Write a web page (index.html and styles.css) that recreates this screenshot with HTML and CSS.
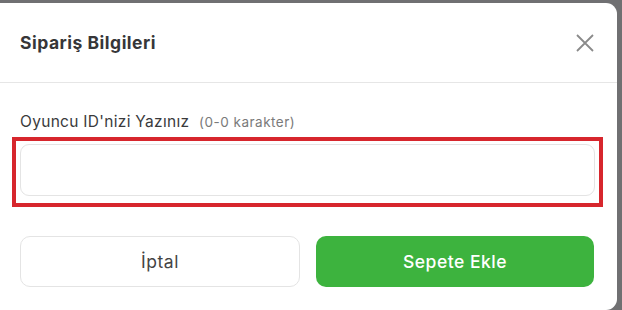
FILE: index.html
```html
<!DOCTYPE html>
<html lang="tr">

<head>
    <meta charset="UTF-8" />
    <title>Sipariş Bilgileri</title>
    <link rel="stylesheet" href="styles.css">
</head>

<body>
    <div class="modal">
        <div class="modal-header">
            <div class="modal-title">Sipariş Bilgileri</div>
            <button class="close-btn" title="Kapat">
                <svg viewBox="0 0 20 20">
                    <path d="M2 2 L18 18 M18 2 L2 18" />
                </svg>
            </button>
        </div>

        <div class="modal-body">
            <label for="playerId">Oyuncu ID'nizi Yazınız <span class="hint">(0-0 karakter)</span></label>
            <div class="input-outline">
                <input type="text" id="playerId" />
            </div>

            <div class="button-row">
                <button class="btn btn-cancel">İptal</button>
                <button class="btn btn-add">Sepete Ekle</button>
            </div>
        </div>
    </div>
</body>

</html>
```

FILE: styles.css
```css
body {
    background-color: #707072;
    /* dimmed backdrop */
    font-family: Inter, "Noto Sans", sans-serif;
    margin: 0;
    padding: 3px 5px 0 0;
    height: 310px;
    box-sizing: border-box;
    overflow: hidden;
}

.modal {
    background-color: #fff;
    border-radius: 0 11px 11px 0;
    height: 307px;
    color: #333;
}

.modal-header {
    height: 80px;
    box-sizing: border-box;
    padding: 0 22px 0 20px;
    display: flex;
    align-items: center;
    justify-content: space-between;
    border-bottom: 1px solid #e6e6e6;
}

.modal-title {
    font-size: 17.5px;
    font-weight: 700;
    color: #363638;
    letter-spacing: 0.5px;
}

.close-btn {
    background: none;
    border: none;
    padding: 0;
    width: 20px;
    height: 20px;
    cursor: pointer;
}

.close-btn svg {
    width: 20px;
    height: 20px;
    stroke: #8a8a8a;
    stroke-width: 1.8;
    fill: none;
}

.modal-body {
    padding: 29px 14px 0 12px;
}

label {
    display: block;
    font-size: 15.5px;
    line-height: 20px;
    color: #3a3a3c;
    margin: 0 0 5px 8px;
    letter-spacing: 0.3px;
}

.hint {
    font-size: 13.5px;
    color: #7a7a7a;
    margin-left: 5px;
    letter-spacing: 0.5px;
}

.input-outline {
    border: 4px solid #d7262d;
    /* red highlight */
    padding: 3px 4px 7px 4px;
}

.input-outline input {
    display: block;
    width: 100%;
    height: 52px;
    box-sizing: border-box;
    border: 1px solid #e4e4e4;
    border-radius: 9px;
    font-size: 15px;
    padding: 0 14px;
    outline: none;
}

.button-row {
    margin: 29px 0 0 8px;
    display: flex;
    gap: 16px;
    padding-right: 9px;
}

.btn {
    flex: 1;
    height: 51px;
    border-radius: 10px;
    font-family: inherit;
    font-size: 17.5px;
    letter-spacing: 0.5px;
    cursor: pointer;
}

.btn-cancel {
    background-color: #fff;
    border: 1px solid #e4e4e4;
    color: #444;
}

.btn-add {
    background-color: #3db33e;
    border: none;
    color: #fff;
    font-weight: 500;
}
```
